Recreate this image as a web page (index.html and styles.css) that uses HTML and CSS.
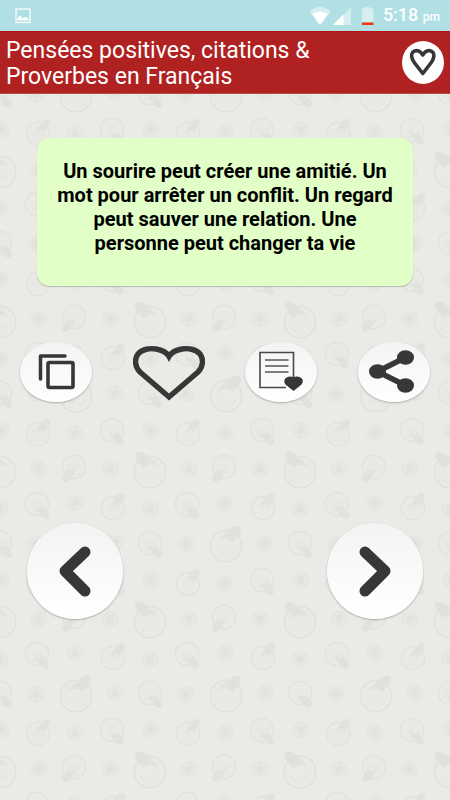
FILE: index.html
```html
<!DOCTYPE html>
<html lang="fr">
<head>
<meta charset="utf-8">
<meta name="viewport" content="width=device-width, initial-scale=1">
<title>Pensées positives, citations &amp; Proverbes en Français</title>
<link rel="stylesheet" href="styles.css">
</head>
<body>
<svg class="backdrop" aria-hidden="true">
  <defs>
    <g id="small">
      <ellipse rx="8" ry="7.500" fill="#e6e7e2" stroke="#e3e4df"/>
      <ellipse rx="3.2" ry="4" fill="#e1e2dd" transform="rotate(20)"/>
    </g>
    <g id="medium">
      <circle r="11.7" fill="#e9eae5" stroke="#e1e2dd" stroke-width="1.4"/>
      <path d="M-7 -1Q-4 -4 0 -3Q5 -4 8 0Q5 4 2 2L-1 3L-5 2Z" fill="#e7e8e3"/>
      <path d="M-5 5Q-3 8 0 6M3 7L5 6" fill="none" stroke="#e3e4df"/>
    </g>
    <g id="ear" fill="#e1e2dd">
      <ellipse cx="7.500" cy="-10.500" rx="5" ry="4" transform="rotate(-40 7.500 -10.500)"/>
      <path d="M3 -11L9 -6L6 -2L3 -4L-3 -2Z"/>
    </g>
    <g id="mediumUp"><use href="#medium"/><use href="#ear"/></g>
    <g id="mediumDown"><use href="#medium"/><use href="#ear" transform="scale(1 -1)"/></g>
    <g id="mediumLeft"><use href="#medium"/><use href="#ear" transform="scale(-1 -1)"/></g>
    <g id="big">
      <circle r="15.8" fill="#e9eae5" stroke="#e0e1dc" stroke-width="1.5"/>
      <path d="M-8 -5Q-4 -12 3 -15L13 -11Q9 -7 7 -4L2 -7Q-4 -8 -8 -5Z" fill="#e1e2dd"/>
      <ellipse cx="8" cy="-14" rx="8" ry="5" fill="#e0e1dc" transform="rotate(-35 8 -14)"/>
      <path d="M-8 3Q-5 8 -1 5M3 9Q8 10 9 4" fill="none" stroke="#e2e3de"/>
    </g>
    <pattern id="doodles" width="150" height="150" patternUnits="userSpaceOnUse" patternTransform="translate(0 40)">
      <use href="#mediumDown" x="37" y="14"/><use href="#small" x="75" y="13"/><use href="#mediumUp" x="113" y="18"/>
      <use href="#small" x="0" y="19"/><use href="#small" x="150" y="19"/>
      <use href="#mediumDown" x="0" y="53"/><use href="#mediumDown" x="150" y="53"/>
      <use href="#small" x="36" y="54"/><use href="#big" x="76" y="56"/><use href="#small" x="115" y="53"/>
      <use href="#small" x="1" y="90"/><use href="#small" x="151" y="90"/>
      <use href="#mediumUp" x="38" y="94"/><use href="#small" x="75" y="93"/><use href="#mediumDown" x="112" y="90"/>
      <use href="#big" transform="translate(0 132) scale(-1 1)"/><use href="#big" transform="translate(150 132) scale(-1 1)"/>
      <use href="#small" x="39" y="129"/><use href="#mediumLeft" x="74" y="127"/><use href="#small" x="110" y="129"/>
    </pattern>
  </defs>
  <rect width="100%" height="100%" fill="url(#doodles)"/>
</svg>

<div class="status">
  <svg class="status-picture" viewBox="0 0 16 16" aria-hidden="true">
    <rect x="1" y="1" width="14" height="13.5" fill="none" stroke="#fff" stroke-width="1.2"/>
    <path d="M2.500 12.500V10L5 7.500L7.500 10L10 9L13.500 10.500V12.500Z" fill="#fff"/>
  </svg>
  <svg class="status-icons" viewBox="0 0 66 20" aria-hidden="true">
    <path d="M0.500 5Q11 -3 22 5L11 19Z" fill="#d5eef1"/>
    <path d="M3 8Q11 3 19 8L11 19Z" fill="#fff"/>
    <path d="M42 1V19H24Z" fill="#d5eef1"/>
    <path d="M34.500 8.500V19H24Z" fill="#fff"/>
    <path d="M53 2.500H56V1H61V2.500H64.500V16H53Z" fill="#d5eef1"/>
    <path d="M53 16.500H64.500V19H53Z" fill="#f4380d"/>
  </svg>
  <span class="clock">5:18 <small>pm</small></span>
</div>

<header class="bar">
  <h1>Pensées positives, citations &amp; Proverbes en Français</h1>
  <button class="favourites" aria-label="Favoris">
    <svg viewBox="0 0 42 42" aria-hidden="true">
      <path d="M20.800 13.500C18 8.500 13 8 10.500 11C8 14.500 10 18 13 22L20.800 32L28.500 22C31.500 18 33.500 14.500 31 11C28.500 8 23.500 8.500 20.800 13.500Z" fill="none" stroke="#373737" stroke-width="3.6" stroke-linejoin="round"/>
    </svg>
  </button>
</header>

<main>
  <blockquote class="card">Un sourire peut créer une amitié. Un mot pour arrêter un conflit. Un regard peut sauver une relation. Une personne peut changer ta vie</blockquote>

  <div class="actions">
    <button class="oval" aria-label="Copier">
      <svg viewBox="0 0 72 60" aria-hidden="true">
        <path d="M20.500 37V14H45" fill="none" stroke="#373737" stroke-width="3.500" stroke-linecap="round" stroke-linejoin="round"/>
        <rect x="28" y="20.500" width="25" height="25" rx="1.500" fill="none" stroke="#373737" stroke-width="3.600"/>
      </svg>
    </button>
    <button class="plain" aria-label="Aimer">
      <svg viewBox="0 0 72 60" aria-hidden="true">
        <path d="M36 55L7 30C2 25 1 17 5 12C9 7 17 6 23 7C29 8 34 11 36 14.500C38 11 43 8 49 7C55 6 63 7 67 12C71 17 70 25 65 30Z" fill="none" stroke="#373737" stroke-width="5.400" stroke-linejoin="miter"/>
      </svg>
    </button>
    <button class="oval" aria-label="Liste des favoris">
      <svg viewBox="0 0 72 60" aria-hidden="true">
        <path d="M48.500 36V10.500H15V45.500H41" fill="none" stroke="#484848" stroke-width="1.600"/>
        <path d="M20 18H43.500M20 24H43.500M20 30H43.500" fill="none" stroke="#555" stroke-width="1.700"/>
        <path d="M48.500 49L41 43C38.500 40.500 39 37 41.500 35.500C44 34 47 34 48.500 35.500C50 34 53 34 55.500 35.500C58.500 37 58.500 40.500 56 43Z" fill="#373737"/>
      </svg>
    </button>
    <button class="oval" aria-label="Partager">
      <svg viewBox="0 0 72 60" aria-hidden="true">
        <path d="M47.500 15.500L19.500 29.500L47.500 43.500" fill="none" stroke="#373737" stroke-width="5.600"/>
        <g fill="#373737"><ellipse cx="47.500" cy="15.500" rx="8.500" ry="7.300"/><ellipse cx="19.500" cy="29.500" rx="8.500" ry="7.300"/><ellipse cx="47.500" cy="43.500" rx="8.500" ry="7.300"/></g>
      </svg>
    </button>
  </div>

  <nav class="pager">
    <button class="round" aria-label="Précédent">
      <svg viewBox="0 0 96 96" aria-hidden="true"><path d="M58 29L38 48L58 68" fill="none" stroke="#373737" stroke-width="11" stroke-linecap="round" stroke-linejoin="round"/></svg>
    </button>
    <button class="round" aria-label="Suivant">
      <svg viewBox="0 0 96 96" aria-hidden="true"><path d="M38 29L58 48L38 68" fill="none" stroke="#373737" stroke-width="11" stroke-linecap="round" stroke-linejoin="round"/></svg>
    </button>
  </nav>
</main>
</body>
</html>
```

FILE: styles.css
```css
* { box-sizing: border-box; }

body {
  margin: 0;
  min-height: 100vh;
  background: #eaebe6;
  font-family: Roboto, "Liberation Sans", sans-serif;
}

.backdrop {
  position: absolute;
  inset: 0;
  z-index: -1;
  width: 100%;
  height: 100%;
}

button {
  padding: 0;
  border: 0;
  background: none;
  cursor: pointer;
}

button svg {
  display: block;
  width: 100%;
  height: 100%;
}

.status {
  display: flex;
  align-items: center;
  height: 31px;
  padding: 0 10px 0 15px;
  background: #b0dfe4;
  color: #fff;
}

.status-picture {
  width: 16px;
  height: 16px;
}

.status-icons {
  width: 66px;
  height: 20px;
  margin-left: auto;
}

.clock {
  margin-left: 8px;
  font-size: 18px;
  font-weight: 500;
  line-height: 34px;
}

.clock small {
  font-size: 12px;
}

.bar {
  display: flex;
  align-items: center;
  justify-content: space-between;
  padding: 6px 6px 3px;
  border-top: 1px solid #b80f12;
  border-bottom: 1px solid #c04a48;
  background: #b02222;
}

h1 {
  flex: 1;
  max-width: 330px;
  margin: 0;
  color: #fff;
  font-size: 23px;
  font-weight: 400;
  line-height: 26px;
}

.favourites {
  align-self: flex-start;
  width: 42px;
  height: 43px;
  margin-top: 3px;
  border-radius: 50%;
  background: #fff;
}

.card {
  margin: 44px 37px 0;
  padding: 21px 16px 31px;
  border-radius: 13px;
  background: #e1ffc7;
  box-shadow: 0 1px 1px #b4b8b0;
  color: #000;
  font-size: 20px;
  font-weight: 700;
  line-height: 24px;
  text-align: center;
}

.actions {
  display: grid;
  grid-template-columns: repeat(4, 1fr);
  justify-items: center;
  margin-top: 56px;
}

.oval,
.plain {
  width: 72px;
  height: 60px;
}

.oval,
.round {
  border-radius: 50%;
  background: linear-gradient(#f3f3f3, #fff);
  box-shadow: 0 1px 2px #aaa;
}

.pager {
  display: grid;
  grid-template-columns: 1fr 1fr;
  margin: 121px 27px 0;
}

.round {
  width: 96px;
  height: 96px;
}

.round:last-child {
  justify-self: end;
}
```
